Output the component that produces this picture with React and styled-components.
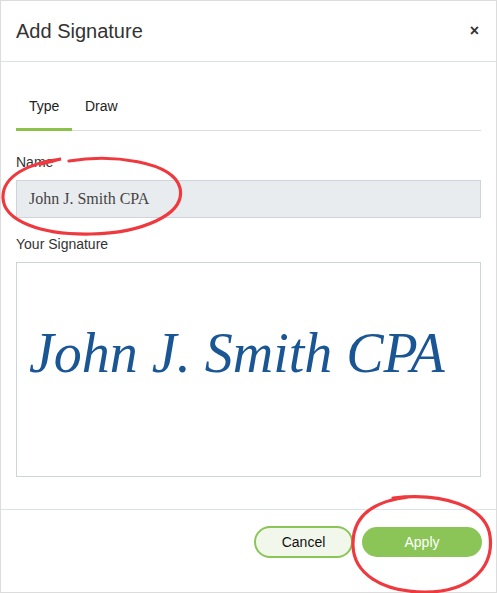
import styled, { createGlobalStyle } from "styled-components";
import { useState } from "react";

const Global = createGlobalStyle`
  html, body { margin: 0; padding: 0; background: #fff; }
  body { font-family: "Liberation Sans", Arial, sans-serif; }
`;

const Modal = styled.div`
  position: relative;
  width: 497px;
  height: 593px;
  box-sizing: border-box;
  border: 1px solid #dcdcdc;
  display: flex;
  flex-direction: column;
  background: #fff;
`;

const Header = styled.div`
  height: 61px;
  display: flex;
  align-items: center;
  justify-content: space-between;
  padding: 0 17px 0 15px;
  border-bottom: 1px solid #dee2e6;
`;

const Title = styled.h4`
  margin: 0;
  font-size: 20px;
  font-weight: 400;
  color: #333;
`;

const Close = styled.button`
  border: 0;
  background: transparent;
  padding: 0;
  font-family: inherit;
  font-size: 16px;
  font-weight: 700;
  color: #333;
  cursor: pointer;
  line-height: 1;
`;

const Body = styled.div`
  flex: 1;
  padding: 26px 15px 32px;
  display: flex;
  flex-direction: column;
`;

const Tabs = styled.div`
  display: flex;
  border-bottom: 1px solid #dcdcdc;
`;

const Tab = styled.button`
  border: 0;
  background: transparent;
  font-family: inherit;
  font-size: 14px;
  color: #222;
  padding: 10px 13px 14px;
  width: ${(p) => p.$w}px;
  margin-bottom: -1px;
  border-bottom: 3px solid ${(p) => (p.$active ? "#8bc34a" : "transparent")};
  cursor: pointer;
  text-align: left;
`;

const Label = styled.label`
  display: block;
  font-size: 14px;
  color: #333;
  margin: ${(p) => p.$top}px 0 10px;
`;

const Input = styled.input`
  box-sizing: border-box;
  width: 100%;
  height: 38px;
  padding: 0 12px;
  border: 1px solid #ced4da;
  background: #e9ecef;
  font-family: "Liberation Serif", "Times New Roman", serif;
  font-size: 16px;
  color: #444;
  outline: none;
`;

const SignatureBox = styled.div`
  box-sizing: border-box;
  height: 215px;
  border: 1px solid #ced4da;
  display: flex;
  align-items: center;
  padding: 0 12px 34px;
`;

const Signature = styled.div`
  font-family: "Liberation Serif", Georgia, serif;
  font-style: italic;
  font-size: 56px;
  color: #1a5594;
  white-space: nowrap;
`;

const Footer = styled.div`
  height: 84px;
  box-sizing: border-box;
  border-top: 1px solid #dee2e6;
  display: flex;
  align-items: flex-start;
  justify-content: flex-end;
  gap: 9px;
  padding: 16px 14px 0;
`;

const Button = styled.button`
  box-sizing: border-box;
  height: ${(p) => (p.$primary ? 30 : 32)}px;
  width: ${(p) => (p.$primary ? 120 : 99)}px;
  margin-top: ${(p) => (p.$primary ? 1 : 0)}px;
  border-radius: 16px;
  font-family: inherit;
  font-size: 14px;
  cursor: pointer;
  color: ${(p) => (p.$primary ? "#fff" : "#111")};
  background: ${(p) => (p.$primary ? "#8bc557" : "#f2f7ec")};
  border: ${(p) => (p.$primary ? "0" : "2px solid #8bc557")};
`;

const Marks = styled.svg`
  position: absolute;
  left: 0;
  top: 0;
  pointer-events: none;
`;

export default function App() {
  const [tab, setTab] = useState("type");
  const [name, setName] = useState("John J. Smith CPA");

  return (
    <>
      <Global />
      <Modal>
        <Header>
          <Title>Add Signature</Title>
          <Close>×</Close>
        </Header>
        <Body>
          <Tabs>
            <Tab $w={56} $active={tab === "type"} onClick={() => setTab("type")}>Type</Tab>
            <Tab $w={60} $active={tab === "draw"} onClick={() => setTab("draw")}>Draw</Tab>
          </Tabs>
          <Label $top={23}>Name</Label>
          <Input value={name} onChange={(e) => setName(e.target.value)} />
          <Label $top={18}>Your Signature</Label>
          <SignatureBox>
            <Signature>{name}</Signature>
          </SignatureBox>
        </Body>
        <Footer>
          <Button>Cancel</Button>
          <Button $primary>Apply</Button>
        </Footer>

        {/* red marker circles drawn over the form */}
        <Marks width="497" height="593" viewBox="0 0 497 593">
          <g fill="none" stroke="#ee3a3f" strokeWidth="3.2" strokeLinecap="round">
            <path d="M68 160 C 110 153, 172 160, 179 187 C 185 214, 140 232, 90 233 C 40 234, 3 220, 2 197 C 1 175, 28 162, 60 158 C 52 160, 46 161, 40 163" />
            <path d="M392 497 C 440 491, 485 505, 489 535 C 493 566, 470 591, 424 591 C 380 591, 353 572, 352 545 C 351 515, 372 500, 408 496" />
          </g>
        </Marks>
      </Modal>
    </>
  );
}
